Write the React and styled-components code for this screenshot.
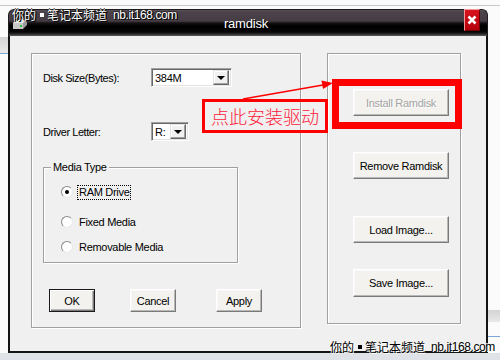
import styled, { createGlobalStyle } from "styled-components";

const GlobalStyle = createGlobalStyle`
  html, body {
    margin: 0;
    padding: 0;
  }
  body {
    width: 500px;
    height: 360px;
    overflow: hidden;
    font-family: "Liberation Sans", Arial, sans-serif;
  }
`;

const Desktop = styled.div`
  position: relative;
  width: 500px;
  height: 360px;
  box-sizing: border-box;
  padding: 9px 12px 7px 8px;
  overflow: hidden;
  background:
    linear-gradient(#dfe3e8, #dfe3e8) 0 353px / 500px 7px no-repeat,
    linear-gradient(#c9c9c9, #c9c9c9) 0 5px / 500px 1px no-repeat,
    linear-gradient(#d4d4d4, #e8e8e8) 0 37px / 8px 16px no-repeat,
    linear-gradient(#7aa7d6, #7aa7d6) 0 53px / 8px 1px no-repeat,
    linear-gradient(#d4d4d4, #e8e8e8) 488px 310px / 12px 12px no-repeat,
    linear-gradient(#7aa7d6, #7aa7d6) 488px 336px / 12px 1px no-repeat,
    #fbfbfb;
`;

const Window = styled.div`
  width: 480px;
  height: 344px;
  display: flex;
  flex-direction: column;
`;

const TitleBar = styled.div`
  height: 27px;
  flex: none;
  display: flex;
  align-items: flex-start;
  box-sizing: border-box;
  border: 1px solid #1e1a1d;
  border-bottom: none;
  border-radius: 6px 6px 0 0;
  background: linear-gradient(
    to bottom,
    #5a5058 0px,
    #4c424a 2px,
    #463d44 11px,
    #141113 13px,
    #000 16px,
    #060606 22px,
    #2c2a2b 24px,
    #5b5b5b 26px
  );
`;

const TitleIcon = styled.svg`
  margin: 7px 0 0 3px;
  flex: none;
`;

const Title = styled.div`
  flex: 1;
  text-align: center;
  color: #fff;
  font-size: 13px;
  letter-spacing: -0.2px;
  padding-top: 6px;
  text-shadow: 1px 1px 0 #000;
`;

const CloseButton = styled.div`
  width: 16px;
  height: 22px;
  margin: -1px 7px 0 0;
  box-sizing: border-box;
  border: 1px solid;
  border-color: #f29a9a #6e0000 #6e0000 #f29a9a;
  background: linear-gradient(#d8141e, #b4000a);
  display: flex;
  align-items: center;
  justify-content: center;
`;

const WindowBody = styled.div`
  flex: 1;
  display: flex;
  align-items: flex-start;
  box-sizing: border-box;
  padding: 17px 0 0 21px;
  border: 2px solid #141414;
  border-top: none;
  background: #f0f0f0;
`;

const Panel = styled.div`
  width: ${(p) => p.$w}px;
  height: ${(p) => p.$h}px;
  margin-left: ${(p) => p.$ml || 0}px;
  box-sizing: border-box;
  border: 1px solid #a0a0a0;
  box-shadow: inset 1px 1px #fff, 1px 1px #fff;
  padding: ${(p) => p.$pad};
  display: flex;
  flex-direction: column;
`;

const Row = styled.div`
  display: flex;
  align-items: center;
  height: 19px;
  margin-top: ${(p) => p.$mt || 0}px;
`;

const Label = styled.div`
  width: 108px;
  font-size: 11px;
  letter-spacing: -0.45px;
  color: #000;
`;

const Combo = styled.div`
  width: ${(p) => p.$w}px;
  height: 19px;
  box-sizing: border-box;
  display: flex;
  align-items: center;
  background: #fff;
  border: 1px solid;
  border-color: #a0a0a0 #fff #fff #a0a0a0;
  box-shadow: inset 1px 1px #696969, inset -1px -1px #e3e3e3;
  padding: 2px;
`;

const ComboText = styled.div`
  flex: 1;
  font-size: 11px;
  letter-spacing: -0.3px;
  padding-left: 1px;
`;

const ComboArrow = styled.div`
  width: 16px;
  height: 15px;
  box-sizing: border-box;
  background: #f0f0f0;
  border: 1px solid;
  border-color: #e3e3e3 #696969 #696969 #e3e3e3;
  box-shadow: inset -1px -1px #a0a0a0, inset 1px 1px #fff;
  display: flex;
  align-items: center;
  justify-content: center;
  &::after {
    content: "";
    border-left: 4px solid transparent;
    border-right: 4px solid transparent;
    border-top: 4px solid #000;
  }
`;

const GroupBox = styled.fieldset`
  margin: 20px 0 0 0;
  padding: 0;
  width: 195px;
  height: 102px;
  min-width: 0;
  box-sizing: border-box;
  border: 1px solid #a0a0a0;
  box-shadow: inset 1px 1px #fff, 1px 1px #fff;
`;

const Legend = styled.legend`
  margin-left: 7px;
  padding: 0 2px;
  font-size: 11px;
  letter-spacing: -0.3px;
  line-height: 13px;
  background: #f0f0f0;
`;

const RadioRow = styled.label`
  display: flex;
  align-items: center;
  height: 14px;
  margin-top: ${(p) => p.$mt}px;
  padding-left: 17px;
  font-size: 11px;
  letter-spacing: -0.3px;
`;

const RadioCircle = styled.span`
  width: 12px;
  height: 12px;
  box-sizing: border-box;
  border-radius: 50%;
  border: 1px solid;
  border-color: #8a8a8a #e8e8e8 #e8e8e8 #8a8a8a;
  background: #fff;
  display: flex;
  align-items: center;
  justify-content: center;
  margin-right: 5px;
  &::after {
    content: "";
    width: 4px;
    height: 4px;
    border-radius: 50%;
    background: ${(p) => (p.$checked ? "#000" : "transparent")};
  }
`;

const RadioText = styled.span`
  padding: 0 1px;
  line-height: 13px;
  outline: ${(p) => (p.$focus ? "1px dotted #000" : "none")};
`;

const ButtonRow = styled.div`
  display: grid;
  grid-template-columns: 81px 86px 46px;
  margin: 26px 0 0 6px;
`;

const Button = styled.div`
  width: ${(p) => p.$w}px;
  height: ${(p) => p.$h}px;
  margin-top: ${(p) => p.$mt || 0}px;
  box-sizing: border-box;
  display: flex;
  align-items: center;
  justify-content: center;
  font-size: 11px;
  letter-spacing: -0.3px;
  color: ${(p) => (p.$disabled ? "#a3a3a3" : "#000")};
  text-shadow: ${(p) => (p.$disabled ? "1px 1px 0 #fff" : "none")};
  background: #f3f2ee;
  border: 1px solid;
  border-color: ${(p) =>
    p.$default ? "#1a1a1a" : "#fff #7a7a7a #7a7a7a #fff"};
  box-shadow: ${(p) =>
    p.$default
      ? "inset 1px 1px #fff, inset -1px -1px #7a7a7a, inset -2px -2px #b8b8b8"
      : "inset -1px -1px #b8b8b8, inset 1px 1px #f8f8f8"};
`;

const Watermark = styled.div`
  position: absolute;
  left: ${(p) => p.$x}px;
  top: ${(p) => p.$y}px;
  display: flex;
  align-items: center;
  white-space: nowrap;
  color: ${(p) => (p.$light ? "#fff" : "#000")};
  text-shadow: ${(p) =>
    p.$light
      ? "1px 1px 0 #000, -1px 0 0 #222, 0 -1px 0 #222, 1px 0 0 #000"
      : "1px 1px 0 #fff, -1px 0 0 #f4f4f4, 0 -1px 0 #f4f4f4"};
`;

const MarkCjk = styled.span`
  font-family: "Noto Sans CJK SC", sans-serif;
  font-size: 12px;
  line-height: 14px;
`;

const MarkDot = styled.span`
  width: 4px;
  height: 4px;
  margin: 0 3px 0 4px;
  background: currentColor;
`;

const MarkUrl = styled.span`
  font-size: 12px;
  letter-spacing: -0.4px;
  margin-left: 6px;
`;

const RedFrame = styled.div`
  position: absolute;
  left: 332px;
  top: 79px;
  width: 130px;
  height: 50px;
  box-sizing: border-box;
  border: 7px solid #ff0000;
`;

const NoteBox = styled.div`
  position: absolute;
  left: 202px;
  top: 99px;
  width: 126px;
  height: 34px;
  box-sizing: border-box;
  border: 3px solid #ff0000;
  display: flex;
  align-items: center;
  justify-content: center;
  font-family: "Noto Sans CJK SC", sans-serif;
  font-weight: 300;
  font-size: 18px;
  color: #ff1a3a;
`;

const ArrowLayer = styled.svg`
  position: absolute;
  left: 0;
  top: 0;
  pointer-events: none;
`;

function Mark({ x, y, light }) {
  return (
    <Watermark $x={x} $y={y} $light={light}>
      <MarkCjk>你的</MarkCjk>
      <MarkDot />
      <MarkCjk>笔记本频道</MarkCjk>
      <MarkUrl>nb.it168.com</MarkUrl>
    </Watermark>
  );
}

function Radio({ label, checked, focus, mt }) {
  return (
    <RadioRow $mt={mt}>
      <RadioCircle $checked={checked} />
      <RadioText $focus={focus}>{label}</RadioText>
    </RadioRow>
  );
}

export default function App() {
  return (
    <>
      <GlobalStyle />
      <Desktop>
        <Window>
          <TitleBar>
            <TitleIcon width="16" height="14" viewBox="0 0 16 14">
              <path d="M1 6 L5 2 L15 2 L15 8 L11 12 L1 12 Z" fill="#9a9a9a" />
              <path d="M1 6 L5 2 L15 2 L11 6 Z" fill="#e8e8e8" />
              <rect x="1" y="6" width="10" height="6" fill="#c8c8c8" />
              <rect x="8" y="8" width="2" height="2" fill="#2fbf3a" />
            </TitleIcon>
            <Title>ramdisk</Title>
            <CloseButton>
              <svg width="10" height="10" viewBox="0 0 10 10">
                <path
                  d="M1.5 1.5 L8.5 8.5 M8.5 1.5 L1.5 8.5"
                  stroke="#fff"
                  strokeWidth="2.6"
                />
              </svg>
            </CloseButton>
          </TitleBar>
          <WindowBody>
            <Panel $w={270} $h={275} $pad="14px 11px 0 11px">
              <Row>
                <Label>Disk Size(Bytes):</Label>
                <Combo $w={81}>
                  <ComboText>384M</ComboText>
                  <ComboArrow />
                </Combo>
              </Row>
              <Row $mt={35}>
                <Label>Driver Letter:</Label>
                <Combo $w={38}>
                  <ComboText>R:</ComboText>
                  <ComboArrow />
                </Combo>
              </Row>
              <GroupBox>
                <Legend>Media Type</Legend>
                <Radio label="RAM Drive" checked focus mt={11} />
                <Radio label="Fixed Media" mt={16} />
                <Radio label="Removable Media" mt={11} />
              </GroupBox>
              <ButtonRow>
                <Button $w={46} $h={23} $default>
                  OK
                </Button>
                <Button $w={46} $h={23}>
                  Cancel
                </Button>
                <Button $w={46} $h={23}>
                  Apply
                </Button>
              </ButtonRow>
            </Panel>
            <Panel $w={134} $h={271} $ml={26} $pad="35px 0 0 25px">
              <Button $w={96} $h={27} $disabled>
                Install Ramdisk
              </Button>
              <Button $w={96} $h={27} $mt={36}>
                Remove Ramdisk
              </Button>
              <Button $w={96} $h={27} $mt={37}>
                Load Image...
              </Button>
              <Button $w={96} $h={28} $mt={26}>
                Save Image...
              </Button>
            </Panel>
          </WindowBody>
        </Window>

        <Mark x={12} y={8} light />
        <Mark x={330} y={340} />

        <RedFrame />
        <NoteBox>点此安装驱动</NoteBox>
        <ArrowLayer width="500" height="360" viewBox="0 0 500 360">
          <line x1="243" y1="99" x2="323" y2="85" stroke="#ff0000" strokeWidth="1.3" />
          <polygon points="333,83 321.5,80.5 323,89" fill="#ff0000" />
        </ArrowLayer>
      </Desktop>
    </>
  );
}
